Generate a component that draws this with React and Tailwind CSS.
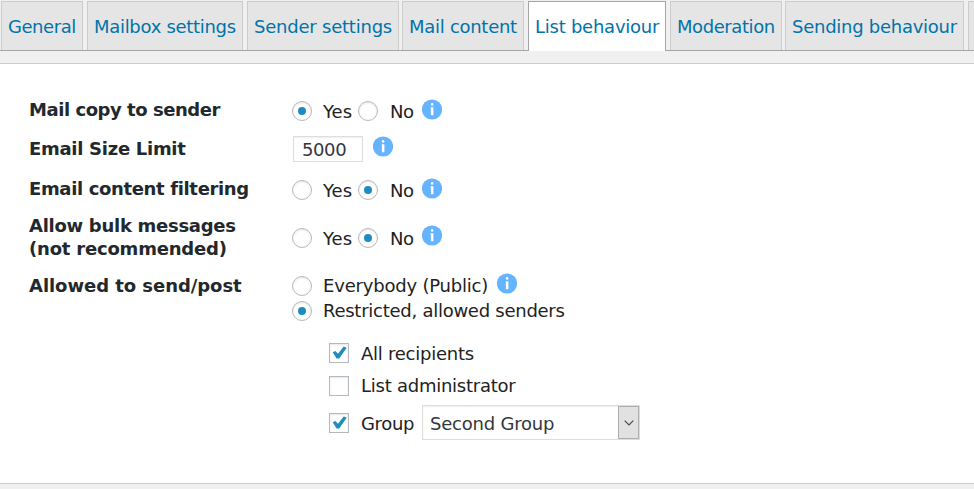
import React from "react";

const TABS = [
  ["General", "ml-px w-[82px] tracking-[-0.45px]"],
  ["Mailbox settings", "ml-1 w-[156px] tracking-[-0.3px]"],
  ["Sender settings", "ml-1 w-[152px] tracking-[-0.22px]"],
  ["Mail content", "ml-[3px] w-[122px] tracking-[-0.28px]"],
  ["List behaviour", "ml-1 w-[138px] tracking-[-0.25px]"],
  ["Moderation", "ml-1 w-[112px] tracking-[-0.42px]"],
  ["Sending behaviour", "ml-[3px] w-[179px] tracking-[-0.26px]"],
  ["", "ml-1 w-[60px]"],
];

function Tab({ label, size, active }) {
  const look = active
    ? "h-[50px] border-[#a5a5a5] bg-white"
    : "h-[49px] border-[#ccc] bg-[#e5e5e5]";
  return (
    <button className={`shrink-0 border border-b-0 pl-[6px] pt-[13px] text-left text-[#0073aa] flex items-start ${size} ${look}`}>
      {label}
    </button>
  );
}

function Radio({ checked, className = "" }) {
  return (
    <span className={`flex size-5 shrink-0 items-center justify-center rounded-full border border-[#b4b9be] bg-white shadow-[inset_0_1px_2px_rgba(0,0,0,0.1)] ${className}`}>
      {checked && <span className="size-2 rounded-full bg-[#1e8cbe]" />}
    </span>
  );
}

function Checkbox({ checked, className = "" }) {
  return (
    <span className={`size-5 shrink-0 border border-[#b4b9be] bg-white shadow-[inset_0_1px_2px_rgba(0,0,0,0.1)] ${className}`}>
      {checked && (
        <svg width="18" height="18" viewBox="0 0 18 18" className="block">
          <path d="M2.7 8.3 5.4 7 8 9.8 13.7 2.5 16.7 3.8 9.2 14.6 6.6 14.6Z" fill="#1e8cbe" />
        </svg>
      )}
    </span>
  );
}

function Info({ className = "" }) {
  return (
    <svg width="20" height="21" viewBox="0 0 20 21" className={`block shrink-0 ${className}`}>
      <circle cx="10" cy="10.5" r="10.1" fill="#66b3ff" />
      <circle cx="10.1" cy="5.4" r="1.3" fill="#fff" />
      <path d="M8.6 8.2H11.4V16.2H8.9V9.4H8.6Z" fill="#fff" />
    </svg>
  );
}

function YesNo({ value, infoClass }) {
  return (
    <>
      <Radio checked={value === "yes"} className="mt-[3px]" />
      <span className="ml-[11px] mt-[2px] w-[35px]">Yes</span>
      <Radio checked={value === "no"} className="mt-[3px]" />
      <span className="ml-[12px] mt-[2px] w-[32px] tracking-[-0.5px]">No</span>
      <Info className={infoClass} />
    </>
  );
}

function Row({ label, height, children, labelClass = "" }) {
  return (
    <div className={`flex items-start ${height}`}>
      <div className={`w-[263px] shrink-0 font-bold text-[#23282d] ${labelClass}`}>{label}</div>
      <div className="flex items-start">{children}</div>
    </div>
  );
}

export default function App() {
  return (
    <div className="h-[489px] w-[974px] overflow-hidden whitespace-nowrap bg-[#f0f0f0] font-['DejaVu_Sans',Verdana,sans-serif] text-[18px] leading-[24px] text-[#222]">
      <nav className="flex h-[51px] items-start overflow-hidden bg-[linear-gradient(#a5a5a5,#a5a5a5)] bg-[length:100%_1px] bg-bottom bg-no-repeat pt-px">
        {TABS.map(([label, size]) => (
          <Tab key={size + label} label={label} size={size} active={label === "List behaviour"} />
        ))}
      </nav>
      <main className="mt-3 h-[421px] border-y border-[#ccc] bg-white pl-[29px] pt-[34px]">
        <Row label="Mail copy to sender" height="h-[38px]" labelClass="tracking-[-0.45px]">
          <YesNo value="yes" infoClass="mt-px" />
        </Row>
        <Row label="Email Size Limit" height="h-[41px]" labelClass="mt-px tracking-[-0.28px]">
          <input
            readOnly
            value="5000"
            className="ml-px h-[26px] w-[70px] border border-[#ddd] bg-white pl-2 tracking-[-0.4px] text-[#32373c] shadow-[inset_0_1px_2px_rgba(0,0,0,0.07)] outline-none"
          />
          <Info className="ml-[10px]" />
        </Row>
        <Row label="Email content filtering" height="h-[48px]" labelClass="tracking-[-0.35px]">
          <YesNo value="no" infoClass="mt-px" />
        </Row>
        <Row
          label={
            <>
              <div className="tracking-[-0.28px]">Allow bulk messages</div>
              <div className="tracking-[-0.2px]">(not recommended)</div>
            </>
          }
          height="h-[48px]"
          labelClass="-mt-[11px] leading-[23px]"
        >
          <YesNo value="no" />
        </Row>
        <Row label="Allowed to send/post" height="h-[170px]" labelClass="mt-[1px] tracking-[-0.05px]">
          <div className="flex flex-col">
            <div className="flex h-[25px] items-start">
              <Radio className="mt-[3px]" />
              <span className="ml-[11px] mt-px w-[174px] tracking-[-0.2px]">Everybody (Public)</span>
              <Info />
            </div>
            <div className="flex h-[44px] items-start">
              <Radio checked className="mt-[3px]" />
              <span className="ml-[11px] mt-px tracking-[-0.26px]">Restricted, allowed senders</span>
            </div>
            <div className="ml-[37px] flex h-[33px] items-start">
              <Checkbox checked className="mt-px" />
              <span className="ml-3 tracking-[-0.25px]">All recipients</span>
            </div>
            <div className="ml-[37px] flex h-[30px] items-start">
              <Checkbox className="mt-px" />
              <span className="ml-3 -mt-px tracking-[-0.25px]">List administrator</span>
            </div>
            <div className="ml-[37px] flex items-start">
              <Checkbox checked className="mt-2" />
              <span className="ml-3 mt-[7px] w-[61px] tracking-[-0.35px]">Group</span>
              <button className="flex h-[35px] w-[218px] items-start justify-between border border-[#ddd] bg-white pl-[7px] text-[#32373c] shadow-[inset_0_1px_2px_rgba(0,0,0,0.07)]">
                <span className="mt-[6px] tracking-[-0.22px]">Second Group</span>
                <span className="flex h-[33px] w-[21px] items-center justify-center border border-[#adadad] bg-[#e1e1e1]">
                  <svg width="10" height="6" viewBox="0 0 10 6">
                    <path d="M.7.7 5 5 9.3.7" fill="none" stroke="#444" strokeWidth="1.1" />
                  </svg>
                </span>
              </button>
            </div>
          </div>
        </Row>
      </main>
    </div>
  );
}
